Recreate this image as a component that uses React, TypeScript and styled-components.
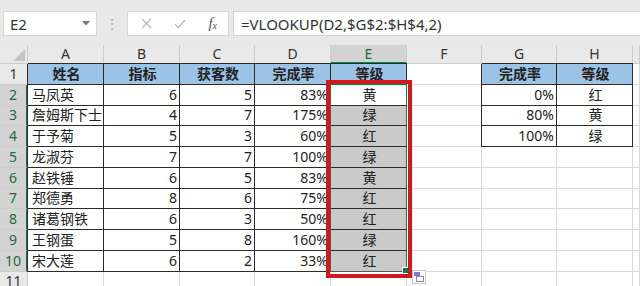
import { createGlobalStyle } from 'styled-components';
import styled from 'styled-components';

const GlobalStyle = createGlobalStyle`
  html, body {
    margin: 0;
    padding: 0;
    background: #ffffff;
    overflow: hidden;
  }
  body {
    font-family: "Noto Sans", "Noto Sans CJK SC", sans-serif;
    color: #222;
  }
`;

interface IRow {
  name: string;
  target: number;
  got: number;
  rate: string;
  level: string;
}

const rows: IRow[] = [
  { name: '马凤英', target: 6, got: 5, rate: '83%', level: '黄' },
  { name: '詹姆斯下士', target: 4, got: 7, rate: '175%', level: '绿' },
  { name: '于予菊', target: 5, got: 3, rate: '60%', level: '红' },
  { name: '龙淑芬', target: 7, got: 7, rate: '100%', level: '绿' },
  { name: '赵铁锤', target: 6, got: 5, rate: '83%', level: '黄' },
  { name: '郑德勇', target: 8, got: 6, rate: '75%', level: '红' },
  { name: '诸葛钢铁', target: 6, got: 3, rate: '50%', level: '红' },
  { name: '王钢蛋', target: 5, got: 8, rate: '160%', level: '绿' },
  { name: '宋大莲', target: 6, got: 2, rate: '33%', level: '红' },
];

const lookup = [
  ['0%', '红'],
  ['80%', '黄'],
  ['100%', '绿'],
];

const letters = ['A', 'B', 'C', 'D', 'E', 'F', 'G', 'H', ''];

export default function App() {
  return (
    <>
      <GlobalStyle />
      <Page>
        <Toolbar>
          <NameBox>
            E2
            <Caret viewBox="0 0 8 5">
              <polygon points="0,0 8,0 4,4.5" fill="#777" />
            </Caret>
          </NameBox>
          <Dots>⋮</Dots>
          <ButtonBox>
            <svg width="11" height="11" viewBox="0 0 11 11">
              <path d="M1 1 L10 10 M10 1 L1 10" stroke="#b8b8b8" strokeWidth="1.3" />
            </svg>
            <svg width="12" height="10" viewBox="0 0 12 10">
              <path d="M1 5 L4.5 8.5 L11 1" stroke="#b8b8b8" strokeWidth="1.3" fill="none" />
            </svg>
            <Fx>
              f<sub>x</sub>
            </Fx>
          </ButtonBox>
          <FormulaBox>=VLOOKUP(D2,$G$2:$H$4,2)</FormulaBox>
        </Toolbar>

        <Sheet>
          <Grid>
            <Corner>
              <svg width="12" height="12" viewBox="0 0 12 12">
                <polygon points="12,0 12,12 0,12" fill="#c4c4c4" />
              </svg>
            </Corner>
            {letters.map((l, i) => (
              <ColHead key={'c' + i} $on={l === 'E'}>
                {l}
              </ColHead>
            ))}

            {/* row 1 */}
            <RowHead>1</RowHead>
            <Cell $fill="blue" $dark $edgeL $edgeT $bold>姓名</Cell>
            <Cell $fill="blue" $dark $edgeT $bold>指标</Cell>
            <Cell $fill="blue" $dark $edgeT $bold>获客数</Cell>
            <Cell $fill="blue" $dark $edgeT $bold>完成率</Cell>
            <Cell $fill="blue" $dark $edgeT $bold>等级</Cell>
            <Cell />
            <Cell $fill="blue" $dark $edgeL $edgeT $bold>完成率</Cell>
            <Cell $fill="blue" $dark $edgeT $bold>等级</Cell>
            <Cell />

            {rows.map((r, i) => (
              <RowGroup key={r.name} r={r} idx={i} />
            ))}

            <RowHead>11</RowHead>
            {letters.map((_, i) => (
              <Cell key={'e' + i} />
            ))}
          </Grid>

          <Selection>
            <Handle />
          </Selection>
          <RedFrame />
          <QuickIcon viewBox="0 0 14 14" width="14" height="14">
            <rect x="0.5" y="0.5" width="13" height="13" fill="#fff" stroke="#c9c9c9" />
            <rect x="2" y="2" width="6" height="4" fill="#7b7bd6" />
            <rect x="4.5" y="6.5" width="7" height="5" fill="none" stroke="#8a8a8a" />
          </QuickIcon>
        </Sheet>
      </Page>
    </>
  );
}

const RowGroup = ({ r, idx }: { r: IRow; idx: number }) => {
  const lk = lookup[idx];
  return (
    <>
      <RowHead $on>{idx + 2}</RowHead>
      <Cell $dark $edgeL>{r.name}</Cell>
      <Cell $dark $align="right">{r.target}</Cell>
      <Cell $dark $align="right">{r.got}</Cell>
      <Cell $dark $align="right">{r.rate}</Cell>
      <Cell $dark $fill={idx === 0 ? 'none' : 'sel'} $align="center">
        {r.level}
      </Cell>
      <Cell />
      {lk ? (
        <>
          <Cell $dark $edgeL $align="right">{lk[0]}</Cell>
          <Cell $dark $align="center">{lk[1]}</Cell>
        </>
      ) : (
        <>
          <Cell />
          <Cell />
        </>
      )}
      <Cell />
    </>
  );
};

const Page = styled.div`
  width: 640px;
  height: 286px;
  overflow: hidden;
  background: #fff;
`;

const Toolbar = styled.div`
  height: 45px;
  box-sizing: border-box;
  padding: 11px 0 9px 3px;
  background: #e8e8e8;
  display: flex;
  align-items: stretch;
`;

const NameBox = styled.div`
  width: 94px;
  box-sizing: border-box;
  background: #fff;
  border: 1px solid #d6d6d6;
  display: flex;
  align-items: center;
  justify-content: space-between;
  padding: 0 6px 0 6px;
  font-size: 15px;
  color: #333;
`;

const Caret = styled.svg`
  width: 8px;
  height: 5px;
`;

const Dots = styled.div`
  width: 30px;
  display: flex;
  align-items: center;
  justify-content: center;
  color: #aaa;
  font-size: 14px;
`;

const ButtonBox = styled.div`
  width: 102px;
  box-sizing: border-box;
  background: #fff;
  border: 1px solid #d6d6d6;
  display: flex;
  align-items: center;
  justify-content: space-between;
  padding: 0 11px 0 13px;
`;

const Fx = styled.span`
  font-family: "Liberation Serif", serif;
  font-style: italic;
  font-size: 15px;
  color: #555;
  sub {
    font-size: 10px;
    vertical-align: -1px;
  }
`;

const FormulaBox = styled.div`
  flex: 1;
  margin-left: 4px;
  background: #fff;
  border: 1px solid #d6d6d6;
  border-right: none;
  display: flex;
  align-items: center;
  padding-left: 7px;
  font-size: 15px;
  color: #333;
  white-space: nowrap;
`;

const Sheet = styled.div`
  position: relative;
`;

const Grid = styled.div`
  display: grid;
  grid-template-columns: 28px 76px 76px 75px 76px 76px 75px 75px 76px 1fr;
  grid-template-rows: 19px repeat(11, 20.75px);
`;

const Corner = styled.div`
  background: #e9e9e9;
  border-right: 1px solid #cdcdcd;
  border-bottom: 1px solid #cdcdcd;
  display: flex;
  align-items: flex-end;
  justify-content: flex-end;
  padding: 0 2px 2px 0;
`;

const ColHead = styled.div<{ $on?: boolean }>`
  background: ${(p) => (p.$on ? '#d3d3d3' : '#e9e9e9')};
  color: ${(p) => (p.$on ? '#1e6b42' : '#333')};
  border-right: 1px solid #cdcdcd;
  border-bottom: ${(p) => (p.$on ? '2px solid #217346' : '1px solid #cdcdcd')};
  font-size: 14px;
  display: flex;
  align-items: center;
  justify-content: center;
  line-height: 1;
`;

const RowHead = styled.div<{ $on?: boolean }>`
  background: ${(p) => (p.$on ? '#d3d3d3' : '#e9e9e9')};
  color: ${(p) => (p.$on ? '#1e6b42' : '#333')};
  border-right: ${(p) => (p.$on ? '2px solid #217346' : '1px solid #cdcdcd')};
  border-bottom: 1px solid #cdcdcd;
  font-size: 14px;
  display: flex;
  align-items: center;
  justify-content: center;
  line-height: 1;
`;

type Fill = 'none' | 'blue' | 'sel';

const fills: Record<Fill, string> = {
  none: '#ffffff',
  blue: '#9cc3e6',
  sel: '#c9c9c9',
};

const Cell = styled.div<{
  $fill?: Fill;
  $dark?: boolean;
  $edgeL?: boolean;
  $edgeT?: boolean;
  $bold?: boolean;
  $align?: 'left' | 'right' | 'center';
}>`
  background: ${(p) => fills[p.$fill || 'none']};
  border-right: 1px solid ${(p) => (p.$dark ? '#2b2b2b' : '#dadada')};
  border-bottom: 1px solid ${(p) => (p.$dark ? '#2b2b2b' : '#dadada')};
  box-shadow: ${(p) =>
    [p.$edgeL ? '-1px 0 0 #2b2b2b' : '', p.$edgeT ? '0 -1px 0 #2b2b2b' : '']
      .filter(Boolean)
      .join(', ') || 'none'};
  font-family: "Noto Sans", "Noto Sans CJK SC", sans-serif;
  font-size: 14px;
  font-weight: ${(p) => (p.$bold ? 700 : 400)};
  color: #222;
  display: flex;
  align-items: center;
  justify-content: ${(p) =>
    p.$bold || p.$align === 'center'
      ? 'center'
      : p.$align === 'right'
      ? 'flex-end'
      : 'flex-start'};
  padding: 0 2px 0 4px;
  line-height: 1;
  white-space: nowrap;
  overflow: hidden;
`;

const Selection = styled.div`
  position: absolute;
  left: 330px;
  top: 39px;
  width: 77px;
  height: 188px;
  box-sizing: border-box;
  border: 1px solid #217346;
  pointer-events: none;
`;

const Handle = styled.div`
  position: absolute;
  right: -3px;
  bottom: -3px;
  width: 5px;
  height: 5px;
  background: #217346;
  border: 1px solid #fff;
`;

const RedFrame = styled.div`
  position: absolute;
  left: 326px;
  top: 35px;
  width: 86px;
  height: 198px;
  box-sizing: border-box;
  border: 4px solid #d4161f;
  pointer-events: none;
`;

const QuickIcon = styled.svg`
  position: absolute;
  left: 412px;
  top: 225px;
`;
